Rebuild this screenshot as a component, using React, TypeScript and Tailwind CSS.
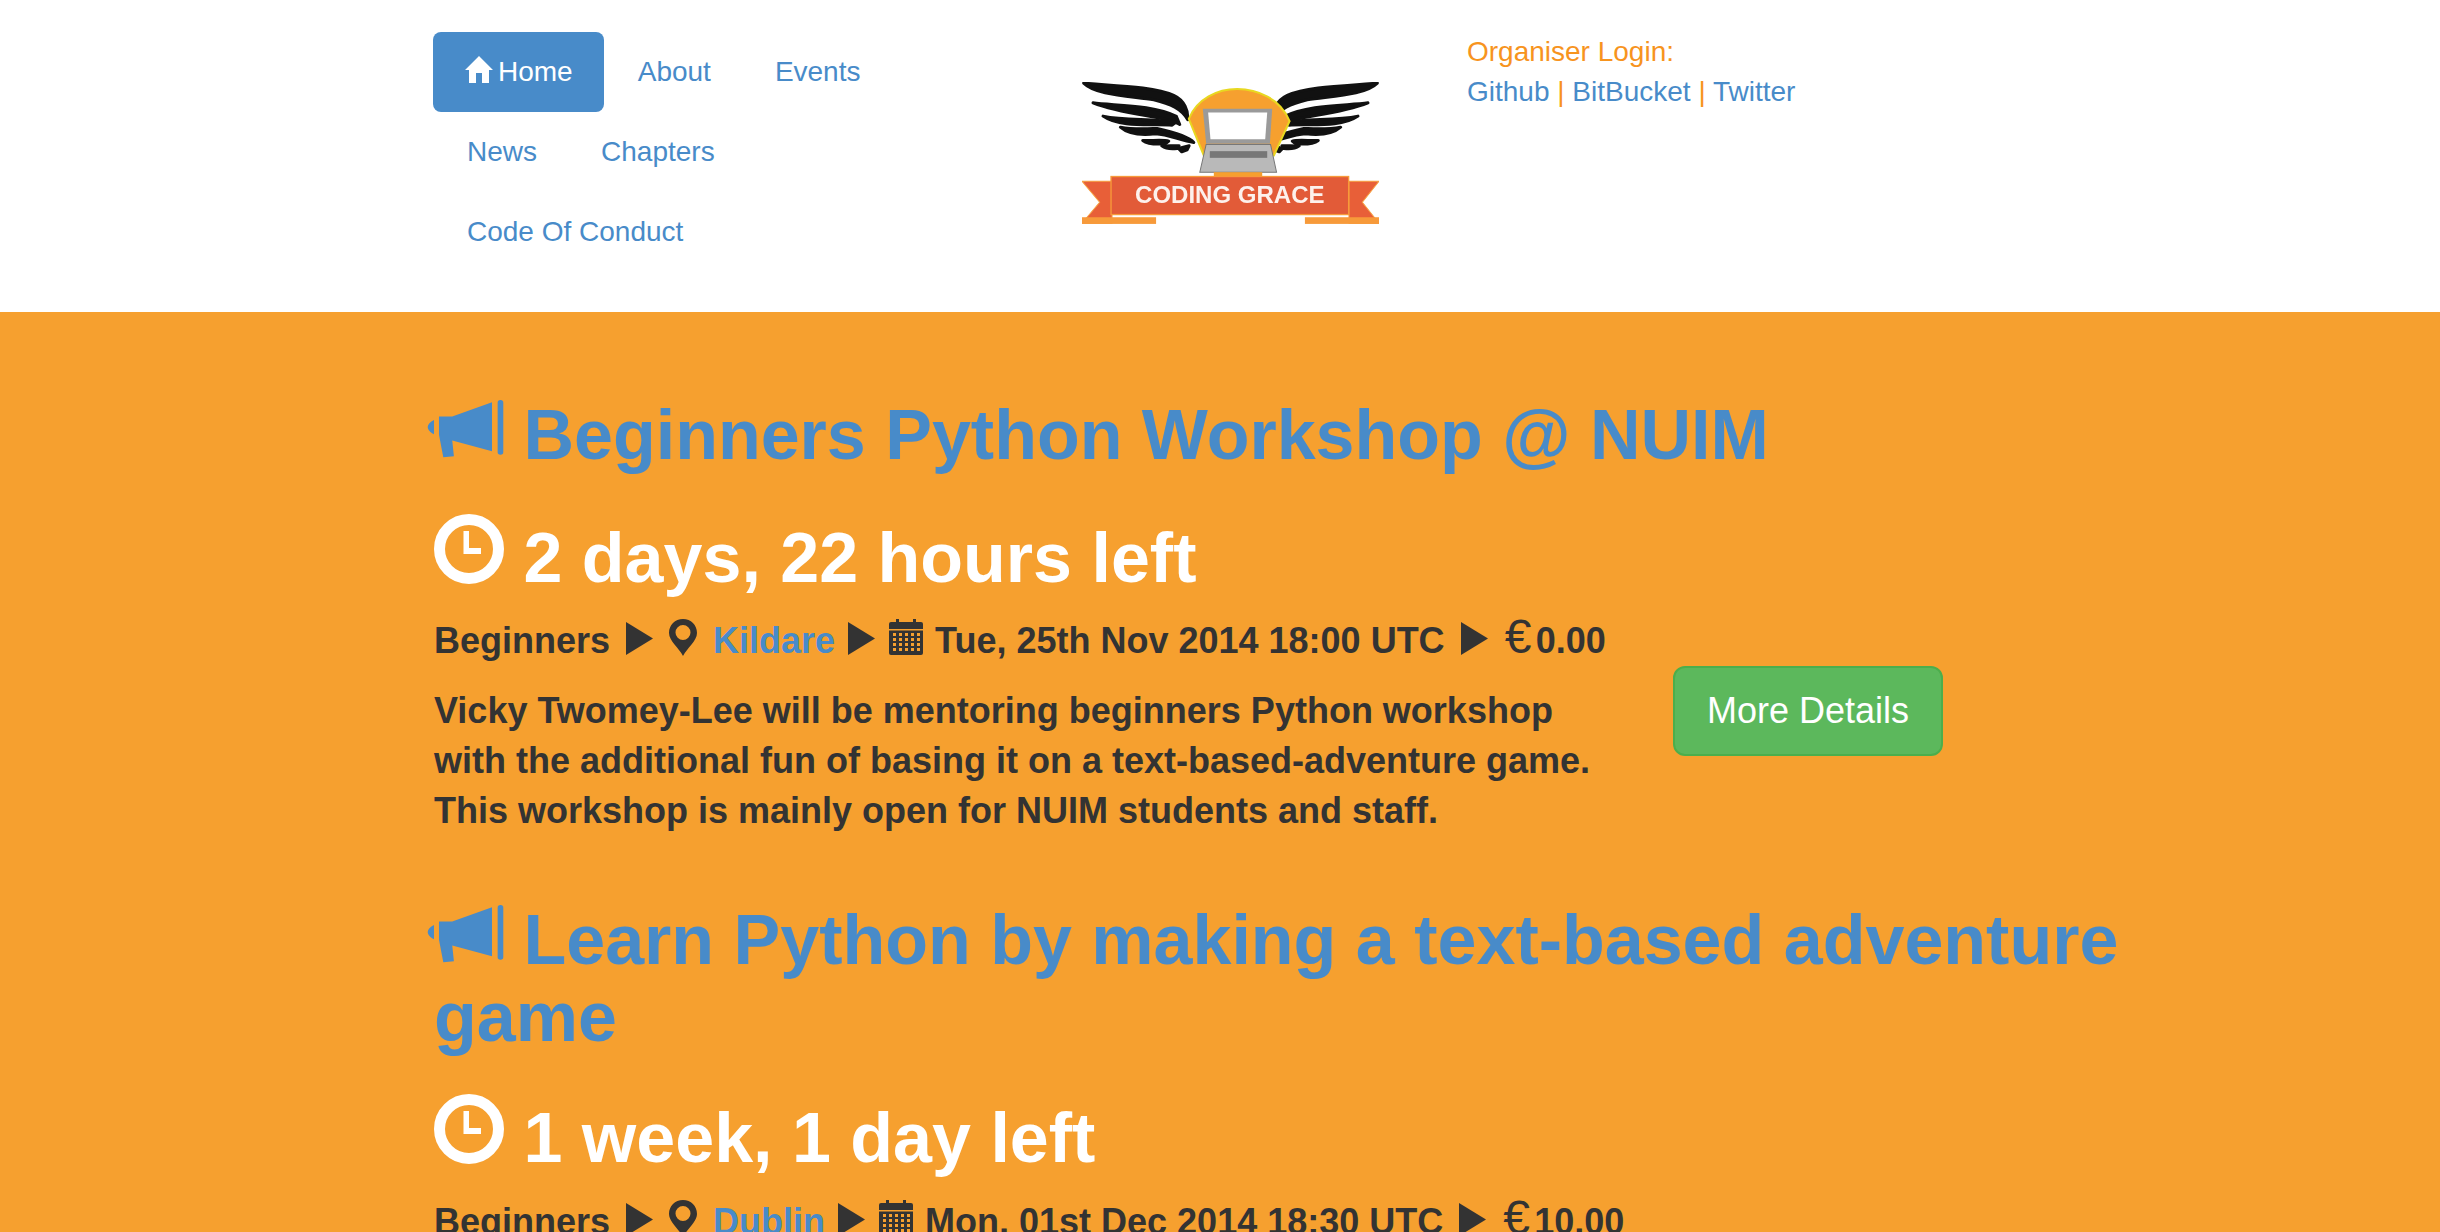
const HomeIcon = () => (
  <svg viewBox="0 0 30 30" className="w-[30px] h-[30px] shrink-0 fill-white mt-[-4px]">
    <path d="M15 1 L29 15 H25 V28 H18 V18 H12 V28 H5 V15 H1 Z" />
  </svg>
);

const Bullhorn = () => (
  <svg viewBox="50 55 230 175" className="inline-block w-[77px] h-[58px] fill-[#488bc9] align-[1px] ml-[-7px]">
    <path d="M70 115 C56 122 48 132 52 142 C55 150 62 155 70 158 Z" />
    <path d="M85 105 L125 105 L245 62 L245 210 L125 177 L130 225 L98 228 L85 160 Z" />
    <rect x="262" y="55" width="17" height="165" rx="8" />
  </svg>
);

const Clock = () => (
  <svg viewBox="0 0 70 70" className="inline-block w-[70px] h-[70px] fill-white align-[-2px]">
    <circle cx="35" cy="35" r="29.5" fill="none" stroke="#fff" strokeWidth="11" />
    <path d="M29.5 17 H35 V34 H47 V40 H29.5 Z" />
  </svg>
);

const Play = () => (
  <svg viewBox="0 0 27 33" className="w-[27px] h-[33px] shrink-0 fill-[#333] mt-[-6px]">
    <path d="M0 0 L27 16.5 L0 33 Z" />
  </svg>
);

const Marker = () => (
  <svg viewBox="0 0 28 37" className="w-[28px] h-[37px] shrink-0 fill-[#333] mt-[-8px]">
    <path
      fillRule="evenodd"
      d="M14 0 C6 0 0 6 0 14 C0 22 10 29 14 37 C18 29 28 22 28 14 C28 6 22 0 14 0 Z M14 6 A7.5 7.5 0 1 1 14 21 A7.5 7.5 0 1 1 14 6 Z"
    />
  </svg>
);

const Calendar = () => (
  <svg viewBox="0 0 34 36" className="w-[34px] h-[36px] shrink-0 fill-[#333] ml-[-2px] mr-[-4px] mt-[-8px]">
    <rect x="7" y="0" width="3" height="6" />
    <rect x="24" y="0" width="3" height="6" />
    <rect x="0" y="3" width="34" height="33" rx="2" />
    {[14, 19, 24, 29].map((y) =>
      [4, 10, 16, 22, 28].map((x) => (
        <rect key={`${x}-${y}`} x={x} y={y} width="3" height="3" fill="#f6a02f" />
      )),
    )}
    <rect x="0" y="10" width="34" height="1.5" fill="#f6a02f" />
  </svg>
);

const Feathers = () => (
  <g fill="#111" stroke="#111" strokeWidth="9" strokeLinejoin="round">
    <path d="M130 68 C220 76 340 78 400 105 C432 120 444 150 442 178 C424 145 390 130 340 118 C260 106 165 103 130 68 Z" />
    <path d="M158 127 C220 136 335 132 408 168 L418 192 C380 166 255 166 158 127 Z" />
    <path d="M188 167 C260 182 340 172 405 186 L395 194 C330 190 240 203 188 167 Z" />
    <path d="M240 200 C280 208 320 205 350 204 C400 215 445 228 460 246 C420 240 385 222 345 220 C310 224 265 222 240 200 Z" />
    <path d="M307 240 C330 242 365 236 385 242 L375 250 C350 252 320 250 307 240 Z" />
    <path d="M364 256 C380 258 400 254 416 256 L410 264 C395 266 375 264 364 256 Z" />
    <path d="M414 264 L446 256 L440 268 L424 274 Z" />
  </g>
);

const Logo = () => (
  <svg viewBox="125 65 890 425" className="w-[297px] h-[142px] shrink-0 ml-[149px] mt-[82px] blur-[0.5px]">
    <Feathers />
    <g transform="translate(1140 0) scale(-1 1)">
      <Feathers />
    </g>
    <path d="M445 175 C470 115 530 86 590 86 C650 86 720 115 747 182 L700 285 L490 285 Z" fill="#f6a02f" stroke="#e8d820" strokeWidth="6" />
    <path d="M487 145 H695 L688 250 H497 Z" fill="#9a9a9a" />
    <path d="M503 156 H680 L674 236 H510 Z" fill="#fff" />
    <path d="M497 252 H690 L708 335 H478 Z" fill="#b9b9b9" stroke="#777" strokeWidth="3" />
    <rect x="508" y="272" width="172" height="20" fill="#777" />
    <rect x="520" y="335" width="145" height="14" fill="#f6a02f" />
    <path d="M125 362 H215 V488 H125 L178 425 Z" fill="#e85f38" stroke="#f7a040" strokeWidth="3" />
    <path d="M1015 362 H925 V488 H1015 L965 425 Z" fill="#e85f38" stroke="#f7a040" strokeWidth="3" />
    <rect x="125" y="470" width="222" height="20" fill="#f79a3a" />
    <rect x="793" y="470" width="222" height="20" fill="#f79a3a" />
    <rect x="212" y="348" width="712" height="114" fill="#e25b38" stroke="#f79a3a" strokeWidth="4" />
    <text x="568" y="428" textAnchor="middle" fontSize="72" fontWeight="700" fill="#fdf1ec" fontFamily="'Liberation Sans', Arial, sans-serif">
      CODING GRACE
    </text>
  </svg>
);

const NavLink = ({ label }: { label: string }) => (
  <a className="block h-20 px-[30px] py-5 ml-[4px] text-[28px] leading-10 text-[#488bc9]">{label}</a>
);

type Event = {
  title: string;
  left: string;
  city: string;
  date: string;
  price: string;
  description?: string[];
};

const events: Event[] = [
  {
    title: "Beginners Python Workshop @ NUIM",
    left: "2 days, 22 hours left",
    city: "Kildare",
    date: "Tue, 25th Nov 2014 18:00 UTC",
    price: "0.00",
    description: [
      "Vicky Twomey-Lee will be mentoring beginners Python workshop",
      "with the additional fun of basing it on a text-based-adventure game.",
      "This workshop is mainly open for NUIM students and staff.",
    ],
  },
  {
    title: "Learn Python by making a text-based adventure game",
    left: "1 week, 1 day left",
    city: "Dublin",
    date: "Mon, 01st Dec 2014 18:30 UTC",
    price: "10.00",
  },
];

const EventBlock = ({ event }: { event: Event }) => (
  <section className="mb-[66px]">
    <h1 className="text-[70px] leading-[77px] font-bold text-[#488bc9]">
      <Bullhorn /> {event.title}
    </h1>
    <h2 className={event.description ? "mt-[40px] text-[70px] leading-[77px] font-bold text-white" : "mt-[38px] text-[70px] leading-[77px] font-bold text-white"}>
      <Clock /> {event.left}
    </h2>
    <div className={event.description ? "mt-[24px] flex h-10 items-center gap-4 text-[36px] leading-10 font-bold text-[#333]" : "mt-[25px] flex h-10 items-center gap-4 text-[36px] leading-10 font-bold text-[#333]"}>
      <span>Beginners</span>
      <Play />
      <Marker />
      <a className="mr-[-3px] text-[#488bc9]">{event.city}</a>
      <Play />
      <Calendar />
      <span>{event.date}</span>
      <Play />
      <span className="mt-[-8px] ml-[1px]">
        <span className="inline-block w-[31px] text-[48px] leading-none font-normal">€</span>
        {event.price}
      </span>
    </div>
    {event.description && (
      <div className="mt-[25px] flex items-start">
        <p className="w-[1239px] text-[36px] leading-[50px] font-bold text-[#333]">
          {event.description.map((line) => (
            <span key={line} className="block">
              {line}
            </span>
          ))}
        </p>
        <a className="mt-[-20px] flex h-[90px] w-[270px] items-center justify-center rounded-xl border-2 border-[#4cae4c] bg-[#5cb85c] text-[36px] text-white">
          More Details
        </a>
      </div>
    )}
  </section>
);

export default function App() {
  return (
    <div className="h-[1232px] overflow-hidden bg-white font-['Liberation_Sans',Arial,sans-serif]">
      <header className="flex h-[312px] pl-[433px]">
        <nav className="flex h-[240px] w-[500px] mt-8 flex-wrap content-start">
          <a className="flex h-20 items-center gap-[4px] rounded-lg bg-[#488bc9] px-[31px] text-[28px] text-white">
            <HomeIcon />
            Home
          </a>
          {["About", "Events", "News", "Chapters", "Code Of Conduct"].map((label) => (
            <NavLink key={label} label={label} />
          ))}
        </nav>
        <Logo />
        <div className="ml-[88px] mt-[32px] text-[28px] leading-10">
          <div className="text-[#f7941e]">Organiser Login:</div>
          <div className="text-[#488bc9]">
            Github <span className="text-[#f7941e]">|</span> BitBucket <span className="text-[#f7941e]">|</span> Twitter
          </div>
        </div>
      </header>
      <main className="min-h-[920px] bg-[#f6a02f] pl-[434px] pt-[85px]">
        <div className="w-[1800px]">
          {events.map((event) => (
            <EventBlock key={event.title} event={event} />
          ))}
        </div>
      </main>
    </div>
  );
}
